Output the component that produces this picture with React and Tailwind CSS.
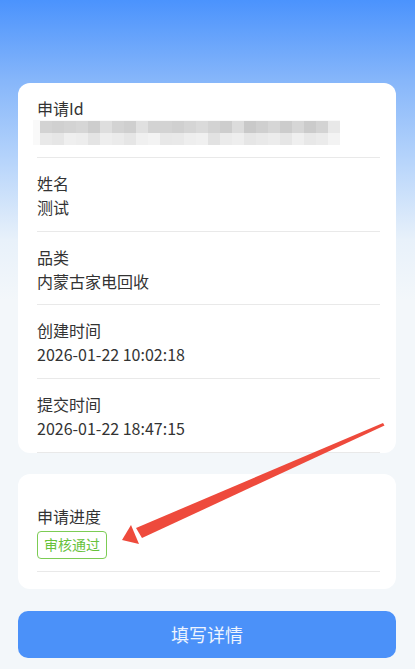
import React from 'react';

const topShades = [
  'bg-[#d3d3d3]', 'bg-[#d0d0d0]', 'bg-[#d3d3d3]', 'bg-[#d6d6d6]', 'bg-[#cdcdcd]',
  'bg-[#dedede]', 'bg-[#d3d3d3]', 'bg-[#cfcfcf]', 'bg-[#e0e0e0]', 'bg-[#d3d3d3]',
  'bg-[#d3d3d3]', 'bg-[#d0d0d0]', 'bg-[#d5d5d5]', 'bg-[#dadada]', 'bg-[#d3d3d3]',
  'bg-[#cdcdcd]', 'bg-[#dcdcdc]', 'bg-[#c9c9c9]', 'bg-[#cfcfcf]', 'bg-[#d6d6d6]',
  'bg-[#cccccc]', 'bg-[#d6d6d6]', 'bg-[#cbcbcb]', 'bg-[#d3d3d3]', 'bg-[#e8e8e8]',
];
const bottomShades = [
  'bg-[#e9e9e9]', 'bg-[#e6e6e6]', 'bg-[#efefef]', 'bg-[#ededed]', 'bg-[#e4e4e4]',
  'bg-[#eeeeee]', 'bg-[#ebebeb]', 'bg-[#e6e6e6]', 'bg-[#f0f0f0]', 'bg-[#f3f3f3]',
  'bg-[#e8e8e8]', 'bg-[#e9e9e9]', 'bg-[#eeeeee]', 'bg-[#f0f0f0]', 'bg-[#e2e2e2]',
  'bg-[#ebebeb]', 'bg-[#eeeeee]', 'bg-[#e6e6e6]', 'bg-[#e9e9e9]', 'bg-[#ececec]',
  'bg-[#e6e6e6]', 'bg-[#efefef]', 'bg-[#e8e8e8]', 'bg-[#ebebeb]', 'bg-[#f3f3f3]',
];

// blurred id value, drawn as a pixel mosaic
function Mosaic() {
  return (
    <div className="relative h-[25px] w-[307px] -ml-[4px] bg-[#f9f9f9]">
      <div className="absolute left-[7px] top-[1px] flex flex-col">
        <div className="flex">
          {topShades.map((c, i) => (
            <div key={i} className={`h-[12px] w-[12px] ${c}`} />
          ))}
        </div>
        <div className="flex">
          {bottomShades.map((c, i) => (
            <div key={i} className={`h-[12px] w-[12px] ${c}`} />
          ))}
        </div>
      </div>
    </div>
  );
}

function Row({ label, children }) {
  return (
    <div className="pt-[13px] pb-[11.75px] border-b border-[#e9e9e9]">
      <div className="text-[16px] leading-[24px] text-[#333333]">{label}</div>
      <div className="text-[16px] leading-[24px] text-[#333333]">{children}</div>
    </div>
  );
}

export default function App() {
  return (
    <div className="relative min-h-screen bg-[linear-gradient(180deg,#4b93fd_0px,#86b6fa_80px,#b6d4fb_160px,#e8f1fa_240px,#f3f7fa_300px)] font-['Noto_Sans_CJK_SC','Noto_Sans',sans-serif] px-[18px] pt-[83px] pb-[12px]">
      {/* info card */}
      <div className="bg-white rounded-[12px] pl-[19px] pr-[16px] w-[378px]">
        <Row label="申请Id">
          <Mosaic />
        </Row>
        <Row label="姓名">测试</Row>
        <Row label="品类">内蒙古家电回收</Row>
        <Row label="创建时间">2026-01-22 10:02:18</Row>
        <Row label="提交时间">2026-01-22 18:47:15</Row>
      </div>

      {/* progress card */}
      <div className="mt-[21px] bg-white rounded-[12px] pl-[19px] pr-[16px] py-[17px] w-[378px]">
        <div className="pt-[13px] pb-[12px] border-b border-[#e9e9e9]">
          <div className="text-[16px] leading-[24px] text-[#333333]">申请进度</div>
          <div className="mt-[3px] inline-flex h-[28px] items-center rounded-[4px] border border-[#7ccc54] bg-white px-[6px] text-[14px] text-[#67c23a]">
            审核通过
          </div>
        </div>
      </div>

      {/* action */}
      <button className="mt-[22px] w-[378px] h-[47px] rounded-[10px] bg-[#4b91f9] text-[18px] text-[#eef4fe] flex items-center justify-center">
        填写详情
      </button>

      {/* annotation arrow */}
      <svg className="absolute left-0 top-0 pointer-events-none" width="415" height="669" viewBox="0 0 415 669">
        <polygon points="383,423 384.5,425.5 142,538 136,528" fill="#ee4a3c" />
        <polygon points="122,540 131,525 139,544" fill="#ee4a3c" />
      </svg>
    </div>
  );
}
